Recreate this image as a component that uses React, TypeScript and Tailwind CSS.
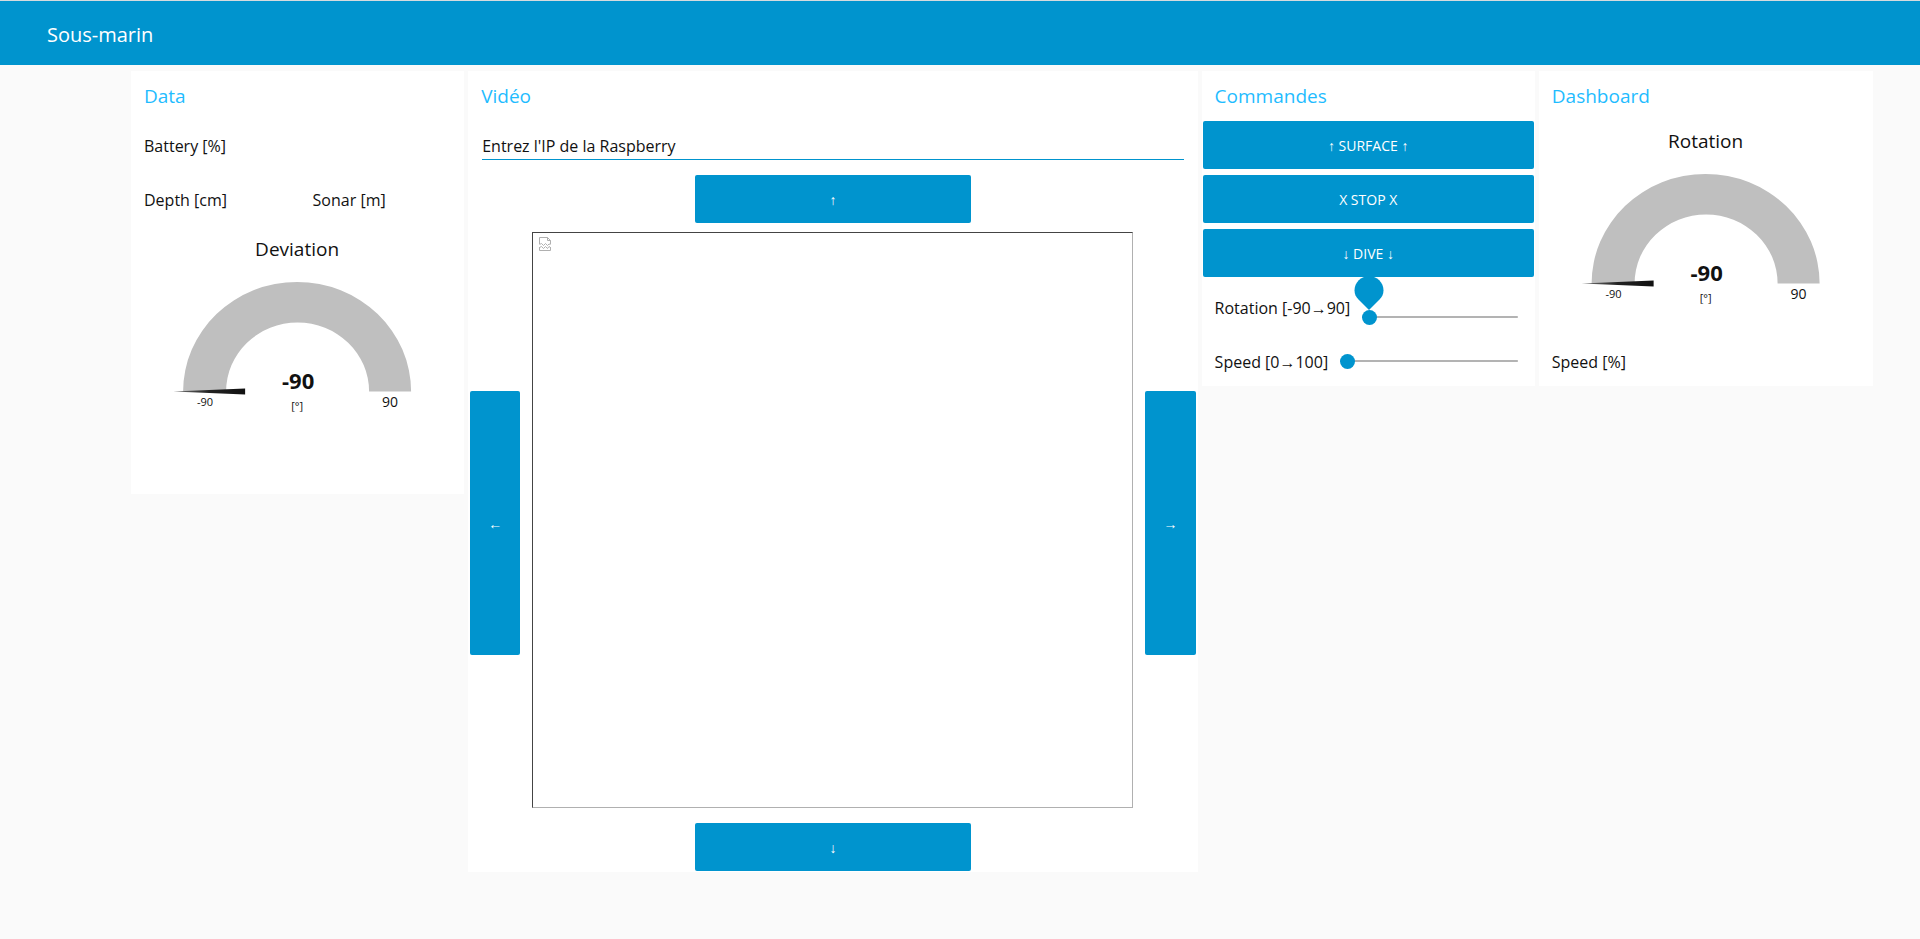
import React, { useId, useState } from "react";

function Card({ title, children }: { title: string; children: React.ReactNode }) {
  return (
    <section className="min-w-0 bg-white px-px pb-px">
      <h2 className="flex h-[50px] items-center px-3 text-[19px] text-[#1fbcff]">{title}</h2>
      <div className="flex flex-col gap-1.5">{children}</div>
    </section>
  );
}

function Label({ children }: { children: React.ReactNode }) {
  return <p className="flex h-12 items-center px-3 pt-0.5 text-[16px] whitespace-nowrap">{children}</p>;
}

function ActionButton({ children, className = "h-12" }: { children: React.ReactNode; className?: string }) {
  return (
    <button type="button" className={`rounded-[2px] bg-[#0094ce] text-[14px] text-white hover:bg-[#0083b8] ${className}`}>
      {children}
    </button>
  );
}

function Gauge({ title, min, max, value, unit }: { title: string; min: number; max: number; value: number; unit: string }) {
  const gradient = useId();
  return (
    <svg viewBox="0 0 331 210" className="h-[210px] w-full" role="img" aria-label={title} fill="#111">
      <defs>
        <linearGradient id={gradient}>
          <stop offset="0" stopColor="#777" />
          <stop offset="0.5" stopColor="#222" />
          <stop offset="1" stopColor="#111" />
        </linearGradient>
      </defs>
      <text x="165" y="27" textAnchor="middle" fontSize="19">{title}</text>
      <path d="M51 162.500A114 109.500 0 0 1 279 162.500H237A71.500 69 0 0 0 94 162.500Z" fill="#bfbfbf" />
      <path d="M41 162.500L113 159.500V165.500Z" fill={`url(#${gradient})`} />
      <text x="166" y="160" textAnchor="middle" fontSize="22" fontWeight="700">{value}</text>
      <text x="165" y="181" textAnchor="middle" fontSize="11">{unit}</text>
      <text x="73" y="177" textAnchor="middle" fontSize="11">{min}</text>
      <text x="258" y="178" textAnchor="middle" fontSize="14">{max}</text>
    </svg>
  );
}

function Slider({ label, min, max, bubble = false }: { label: string; min: number; max: number; bubble?: boolean }) {
  const id = useId();
  const [value, setValue] = useState(min);
  const range =
    "m-0 block h-[15px] w-full cursor-pointer appearance-none bg-transparent bg-[linear-gradient(#b3b3b3,#b3b3b3)] bg-[length:100%_2px] bg-center bg-no-repeat [&::-webkit-slider-thumb]:size-[15px] [&::-webkit-slider-thumb]:appearance-none [&::-webkit-slider-thumb]:rounded-full [&::-webkit-slider-thumb]:bg-[#0094ce]";
  return (
    <div className="flex h-12 items-center gap-3 pr-4 pl-3 text-[16px]">
      <label htmlFor={id} className="pt-0.5 whitespace-nowrap">{label}</label>
      <div className={bubble ? "relative min-w-0 flex-1 pt-5" : "relative min-w-0 flex-1"}>
        {bubble && (
          <svg viewBox="0 0 30 34" className="absolute -top-3.5 -left-2 z-10 h-[34px] w-[30px]" fill="#0094ce" aria-hidden="true">
            <path d="M15 34L4.500 23.500C2 21 .5 18 .5 14.500C.5 6.500 7 0 15 0S29.500 6.500 29.500 14.500C29.500 18 28 21 25.500 23.500Z" />
          </svg>
        )}
        <input
          id={id}
          type="range"
          min={min}
          max={max}
          value={value}
          onChange={(e) => setValue(Number(e.target.value))}
          className={range}
        />
      </div>
    </div>
  );
}

function BrokenImage() {
  return (
    <svg width="12" height="14" viewBox="0 0 12 14" fill="none" stroke="#b0b0b0" aria-hidden="true">
      <path d="M.5 7V.5H8.500L11.500 3.500V7M8.500 .5V3.500H11.500" />
      <path d="M.5 7.500L2.500 6.500L4.500 8.500L6.500 6.500L8.500 8.500L10 7L11.500 7.500M.5 10V13.500H11.500V10M.5 10.500L2.500 9.500L4.500 11.500L6.500 9.500L8.500 11.500L10 9.500L11.500 10.500" />
    </svg>
  );
}

export default function App() {
  return (
    <div className="min-h-screen bg-[#fafafa] font-['Open_Sans','Noto_Sans',sans-serif] text-[#111]">
      <header className="flex h-[65px] items-center border-t border-[#d5dbde] bg-[#0094ce] px-[47px] pt-1 text-white">
        <h1 className="text-[20px] leading-6">Sous-marin</h1>
      </header>
      <main className="grid grid-cols-[333fr_729fr_333fr_334fr] items-start gap-1 pt-1.5 pr-[47px] pb-6 pl-[131px]">
        <Card title="Data">
          <Label>Battery [%]</Label>
          <div className="grid grid-cols-2 gap-1.5">
            <Label>Depth [cm]</Label>
            <Label>Sonar [m]</Label>
          </div>
          <div className="h-[264px]">
            <Gauge title="Deviation" min={-90} max={90} value={-90} unit="[°]" />
          </div>
        </Card>

        <Card title="Vidéo">
          <div className="h-12 px-[13px] pt-2">
            <input
              type="text"
              aria-label="Entrez l'IP de la Raspberry"
              placeholder="Entrez l'IP de la Raspberry"
              className="h-[31px] w-full border-b border-[#0094ce] bg-transparent pt-1 text-[16px] outline-none placeholder:text-[#111]"
            />
          </div>
          <div className="grid grid-cols-13 gap-1.5 px-px">
            <ActionButton className="col-span-5 col-start-5 h-12">↑</ActionButton>
            <div className="col-span-13 grid grid-cols-subgrid items-center">
              <ActionButton className="h-[264px]">←</ActionButton>
              <div className="col-span-11 px-1.5 pt-[3px] pb-[9px]">
                <div className="h-[576px] border border-t-[#444] border-r-[#b0b0b0] border-b-[#b0b0b0] border-l-[#444] px-1.5 py-1">
                  <BrokenImage />
                </div>
              </div>
              <ActionButton className="h-[264px]">→</ActionButton>
            </div>
            <ActionButton className="col-span-5 col-start-5 h-12">↓</ActionButton>
          </div>
        </Card>

        <Card title="Commandes">
          <ActionButton>↑ SURFACE ↑</ActionButton>
          <ActionButton>X STOP X</ActionButton>
          <ActionButton>↓ DIVE ↓</ActionButton>
          <Slider label="Rotation [-90→90]" min={-90} max={90} bubble />
          <Slider label="Speed [0→100]" min={0} max={100} />
        </Card>

        <Card title="Dashboard">
          <Gauge title="Rotation" min={-90} max={90} value={-90} unit="[°]" />
          <Label>Speed [%]</Label>
        </Card>
      </main>
    </div>
  );
}
